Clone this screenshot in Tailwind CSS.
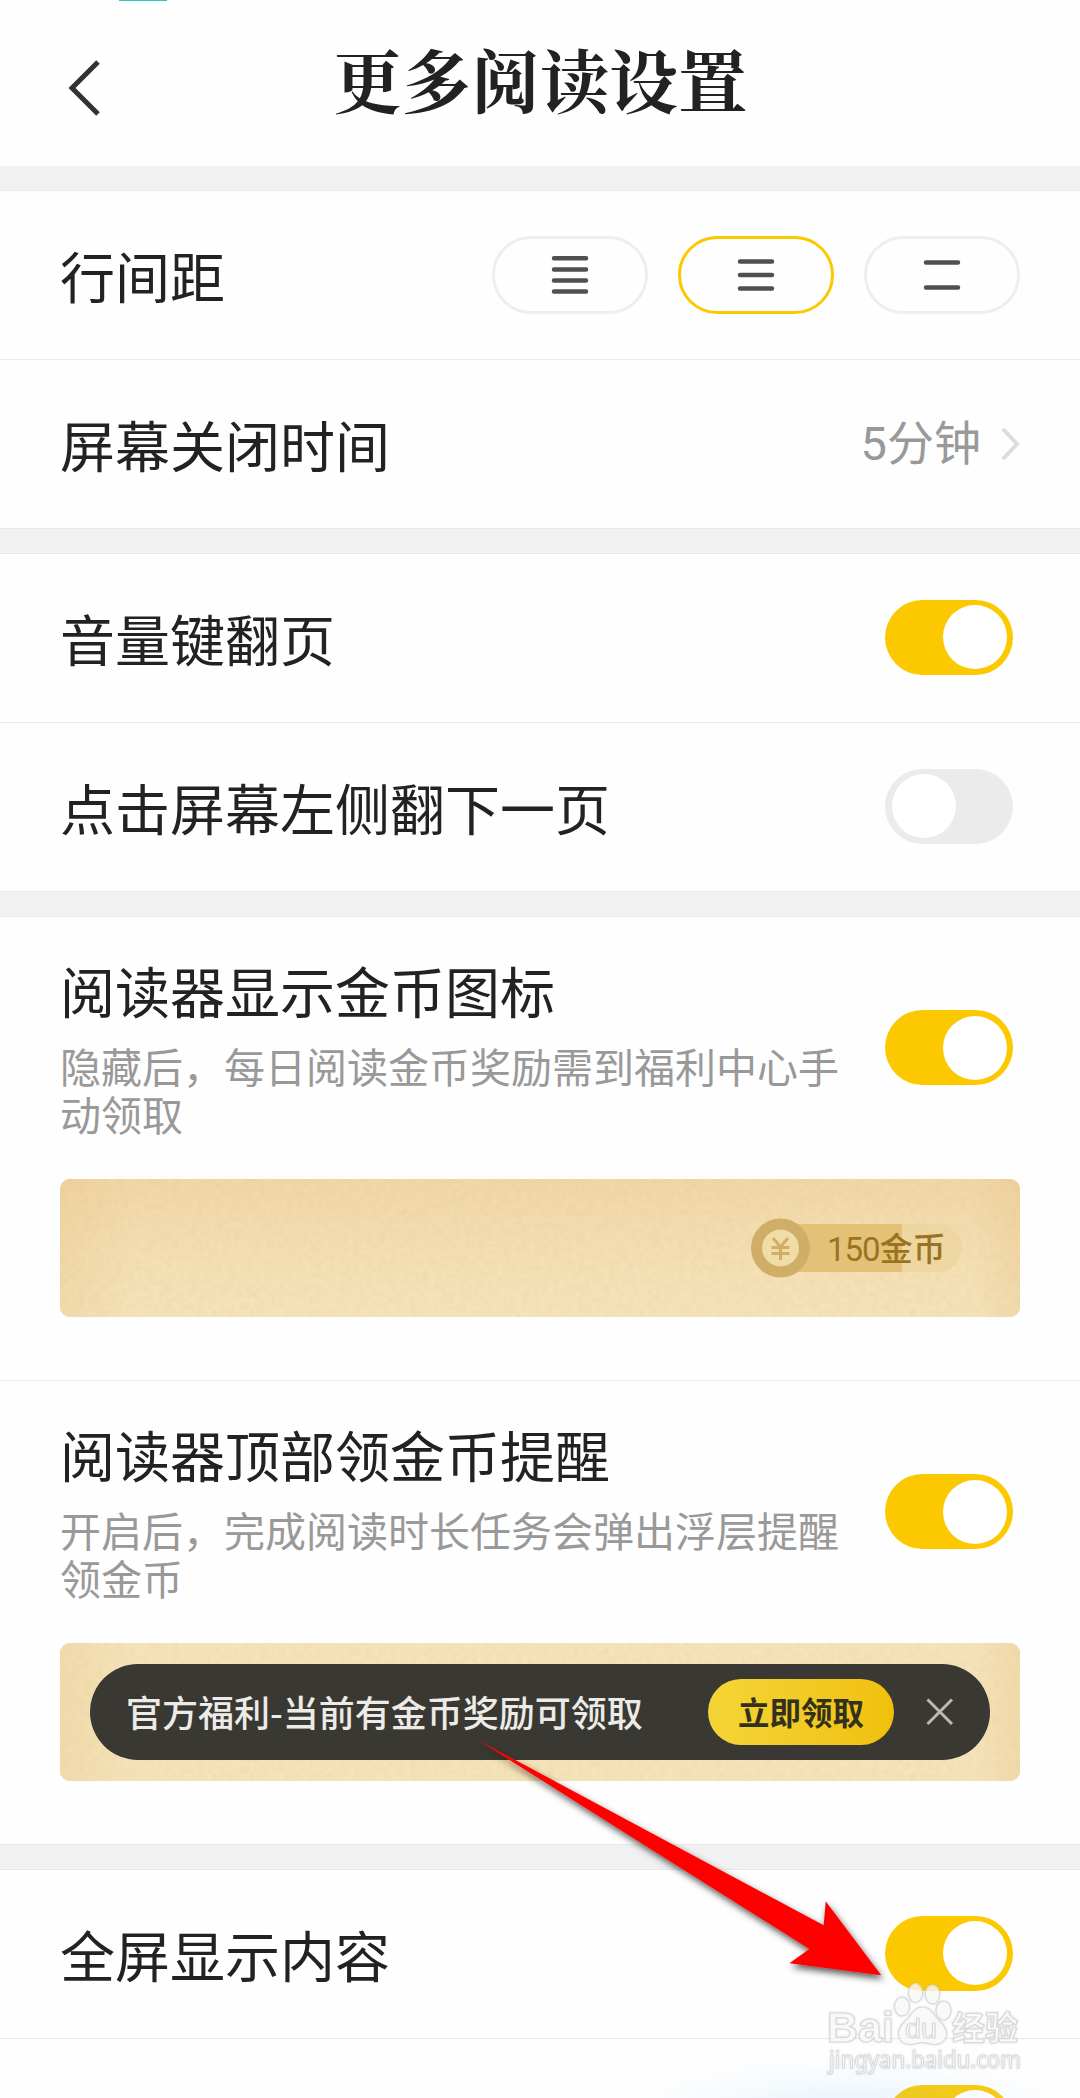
<!DOCTYPE html>
<html lang="zh-CN">
<head>
<meta charset="utf-8">
<title>更多阅读设置</title>
<script src="https://cdn.jsdelivr.net/npm/@tailwindcss/browser@4"></script>
</head>
<body class="bg-white">
<div class="relative w-[1080px] h-[2098px] overflow-hidden bg-[#fefefe] text-[#222] font-['Noto_Sans_CJK_SC',sans-serif]">
  <header class="relative flex h-[166px] items-center justify-center pb-[9px]">
    <div class="absolute left-[119px] top-0 h-px w-12 bg-[#2cc4c4]"></div>
    <svg class="absolute left-[64px] top-[56px]" width="40" height="64" viewBox="0 0 40 64" fill="none" stroke="#333" stroke-width="5"><path d="M34 6 8 32 34 58"/></svg>
    <h1 class="text-[69px] leading-[100px] font-bold font-['Noto_Serif_CJK_SC','Noto_Serif_SC','Source_Han_Serif_SC','Noto_Sans_CJK_SC',serif]">更多阅读设置</h1>
  </header>
  <div class="h-[25px] border-b border-[#e8e8e8] bg-[#f1f1f1]"></div>

  <section>
    <div class="flex h-[169px] items-center justify-between border-b border-[#e8e8e8] px-[60px]">
      <span class="pb-[2px] text-[55px] leading-[80px]">行间距</span>
      <div class="flex gap-[30px]">
        <div class="flex h-[78px] w-[156px] items-center justify-center rounded-full border-3 border-[#eee]">
          <svg width="38" height="42" viewBox="0 0 38 42" stroke="#505050" stroke-width="4.500" stroke-linecap="round"><path d="M3 4.300H35M3 15.400H35M3 26.500H35M3 37.600H35"/></svg>
        </div>
        <div class="flex h-[78px] w-[156px] items-center justify-center rounded-full border-3 border-[#fcc800]">
          <svg width="38" height="42" viewBox="0 0 38 42" stroke="#505050" stroke-width="4.500" stroke-linecap="round"><path d="M3 7.500H35M3 21H35M3 34.500H35"/></svg>
        </div>
        <div class="flex h-[78px] w-[156px] items-center justify-center rounded-full border-3 border-[#eee]">
          <svg width="38" height="42" viewBox="0 0 38 42" stroke="#505050" stroke-width="4.500" stroke-linecap="round"><path d="M3 8.500H35M3 33.500H35"/></svg>
        </div>
      </div>
    </div>
    <div class="flex h-[168px] items-center justify-between px-[60px]">
      <span class="pb-[3px] text-[55px] leading-[80px]">屏幕关闭时间</span>
      <div class="flex items-center gap-[18px] text-[#999]"><span class="pb-[4px] text-[47px] leading-[70px]"><span class="font-[Roboto,sans-serif]">5</span>分钟</span>
        <svg width="21" height="36" viewBox="0 0 21 36" fill="none" stroke="#dcdcdc" stroke-width="4"><path d="M4 3 18 18 4 33"/></svg>
      </div>
    </div>
  </section>
  <div class="h-[26px] border-y border-[#e8e8e8] bg-[#f1f1f1]"></div>

  <section>
    <div class="flex h-[169px] items-center justify-between border-b border-[#e8e8e8] pb-[2px] pl-[60px] pr-[67px]">
      <span class="pb-[1px] text-[55px] leading-[80px]">音量键翻页</span>
      <div class="flex h-[75px] w-[128px] items-center justify-end rounded-full bg-[#fcc800] px-[6px]"><div class="size-16 rounded-full bg-white"></div></div>
    </div>
    <div class="flex h-[168px] items-center justify-between pb-[2px] pl-[60px] pr-[67px]">
      <span class="pb-[1px] text-[55px] leading-[80px]">点击屏幕左侧翻下一页</span>
      <div class="flex h-[75px] w-[128px] items-center rounded-full bg-[#ebebeb] px-[7px]"><div class="size-16 rounded-full bg-white"></div></div>
    </div>
  </section>
  <div class="h-[26px] border-y border-[#e8e8e8] bg-[#f1f1f1]"></div>

  <section>
    <div class="h-[464px] border-b border-[#e8e8e8] px-[60px] pt-[32px]">
      <div class="flex h-[230px] justify-between pr-[7px]">
        <div class="w-[782px]">
          <div class="text-[55px] leading-[80px]">阅读器显示金币图标</div>
          <p class="mt-[12px] text-[41px] leading-[48px] text-[#999]">隐藏后，每日阅读金币奖励需到福利中心手动领取</p>
        </div>
        <div class="mt-[61px] flex h-[75px] w-[128px] items-center justify-end rounded-full bg-[#fcc800] px-[6px]"><div class="size-16 rounded-full bg-white"></div></div>
      </div>
      <div class="relative flex h-[138px] items-center overflow-hidden rounded-[10px] bg-[#f2ddae]">
        <svg class="absolute inset-0" width="960" height="138">
          <defs>
            <linearGradient id="paper1" x1="0" y1="0" x2="0" y2="1"><stop offset="0" stop-color="#f1d7a7"/><stop offset=".55" stop-color="#f4dfb3"/><stop offset="1" stop-color="#f5e3b9"/></linearGradient>
            <linearGradient id="edge" x1="0" x2="1"><stop offset="0" stop-color="#e6bd7c" stop-opacity=".22"/><stop offset=".08" stop-color="#e6bd7c" stop-opacity="0"/><stop offset=".95" stop-color="#e6bd7c" stop-opacity="0"/><stop offset="1" stop-color="#e6bd7c" stop-opacity=".25"/></linearGradient>
            <filter id="grain" x="0" y="0" width="100%" height="100%"><feTurbulence type="fractalNoise" baseFrequency=".16" numOctaves="3" seed="4"/><feColorMatrix values="0 0 0 0 .68  0 0 0 0 .5  0 0 0 0 .25  .7 .5 0 0 -.48"/></filter>
          </defs>
          <rect width="960" height="138" fill="url(#paper1)"/><rect width="960" height="138" fill="url(#edge)"/>
          <rect width="960" height="138" filter="url(#grain)" opacity=".35"/>
        </svg>
        <div class="relative ml-[690px] flex h-[60px] w-[220px] items-center">
          <div class="absolute left-[30px] h-12 w-[182px] rounded-r-full bg-[#ebd29a]/60"></div>
          <div class="absolute left-[30px] h-12 w-[122px] bg-[#e3c277]"></div>
          <svg class="relative" width="60" height="60" viewBox="0 0 60 60"><circle cx="30.500" cy="30" r="29.500" fill="#cfae67"/><circle cx="30.500" cy="30" r="18.500" fill="#f2dca5"/><path d="M23 20l7.500 9 7.500-9M21.500 29.500h18M21.500 35.500h18M30.500 29v13" fill="none" stroke="#cfae67" stroke-width="3"/></svg>
          <span class="relative ml-[17px] flex items-baseline font-medium leading-[60px] text-[#9a7321]"><span class="font-[Roboto,sans-serif] text-[33px] font-normal tracking-[-1px]">150</span><span class="text-[33px]">金币</span></span>
        </div>
      </div>
    </div>

    <div class="h-[463px] px-[60px] pt-[32px]">
      <div class="flex h-[230px] justify-between pr-[7px]">
        <div class="w-[782px]">
          <div class="text-[55px] leading-[80px]">阅读器顶部领金币提醒</div>
          <p class="mt-[12px] text-[41px] leading-[48px] text-[#999]">开启后，完成阅读时长任务会弹出浮层提醒领金币</p>
        </div>
        <div class="mt-[61px] flex h-[75px] w-[128px] items-center justify-end rounded-full bg-[#fcc800] px-[6px]"><div class="size-16 rounded-full bg-white"></div></div>
      </div>
      <div class="relative flex h-[138px] items-center justify-center overflow-hidden rounded-[10px] bg-[#f2ddae]">
        <svg class="absolute inset-0" width="960" height="138"><rect width="960" height="138" fill="#f5e3b9"/><rect width="960" height="138" fill="url(#edge)"/><rect width="960" height="138" filter="url(#grain)" opacity=".28"/></svg>
        <div class="relative flex h-24 w-[900px] items-center rounded-full bg-[#3a3832] pl-[36px]">
          <span class="w-[582px] pb-[3px] text-[36px] font-medium leading-[54px] text-[#ecebe7]">官方福利-当前有金币奖励可领取</span>
          <div class="flex h-[66px] w-[186px] items-center justify-center rounded-full bg-linear-to-r from-[#f4d536] to-[#f0c008] pb-[2px] text-[31.500px] font-bold leading-[48px] text-[#33301c]">立即领取</div>
          <svg class="ml-[31px]" width="30" height="30" viewBox="0 0 30 30" stroke="#bbb9b4" stroke-width="3"><path d="M2.500 2.500 27 27M27 2.500 2.500 27"/></svg>
        </div>
      </div>
    </div>
  </section>
  <div class="h-[26px] border-y border-[#e8e8e8] bg-[#f1f1f1]"></div>

  <section>
    <div class="flex h-[169px] items-center justify-between border-b border-[#e8e8e8] pb-[2px] pl-[60px] pr-[67px]">
      <span class="text-[55px] leading-[80px]">全屏显示内容</span>
      <div class="flex h-[75px] w-[128px] items-center justify-end rounded-full bg-[#fcc800] px-[6px]"><div class="size-16 rounded-full bg-white"></div></div>
    </div>
    <div class="flex h-[168px] items-center justify-end pb-[2px] pr-[67px]">
      <div class="flex h-[75px] w-[128px] items-center justify-end rounded-full bg-[#fcc800] px-[6px]"><div class="size-16 rounded-full bg-white"></div></div>
    </div>
  </section>

  <svg class="pointer-events-none absolute inset-0" width="1080" height="2098" viewBox="0 0 1080 2098">
    <defs>
      <radialGradient id="glow"><stop offset="0" stop-color="#7dc3f2" stop-opacity=".3"/><stop offset=".5" stop-color="#9dd2f6" stop-opacity=".13"/><stop offset="1" stop-color="#c9e7fb" stop-opacity="0"/></radialGradient>
      <filter id="shade" x="-10%" y="-10%" width="120%" height="120%"><feDropShadow dx="2" dy="4" stdDeviation="3.500" flood-color="#000" flood-opacity=".65"/></filter>
      <filter id="soft"><feDropShadow dx="0" dy="0" stdDeviation=".8" flood-color="#888" flood-opacity=".3"/></filter>
    </defs>
    <ellipse cx="850" cy="2125" rx="250" ry="75" fill="url(#glow)"/>
    <path d="M477 1739.500 823.700 1925.300 825.700 1901.300 881.200 1975.300 789.400 1963.300 809.400 1949Z" fill="#f00" filter="url(#shade)"/>
    <g fill="#fff" fill-opacity=".72" stroke="#d9d9d9" stroke-width="1.200" filter="url(#soft)" font-family="Liberation Sans, sans-serif">
      <text x="827" y="2042" font-size="43" font-weight="bold" textLength="67" lengthAdjust="spacingAndGlyphs">Bai</text>
      <ellipse cx="902" cy="2006.500" rx="7.500" ry="9.500"/><ellipse cx="915.500" cy="1993" rx="7" ry="9.500"/><ellipse cx="932.500" cy="1994.500" rx="7.300" ry="9.500"/><ellipse cx="943.500" cy="2010.500" rx="7.500" ry="9.500"/>
      <path d="M922.500 2007c7 0 10 5 13 9.500 4 5 11 9 11 17 0 7-5 11-12 11-5 0-8-2-12-2s-7 2-12 2c-7 0-12-4-12-11 0-8 7-12 11-17 3-4.500 6-9.500 13-9.500Z"/>
      <text x="905" y="2038" font-size="27" textLength="32" lengthAdjust="spacingAndGlyphs">du</text>
      <text x="952" y="2040" font-size="33" font-weight="bold" font-family="Noto Sans CJK SC, sans-serif">经验</text>
      <text x="829" y="2068" font-size="24" stroke-width="1" font-family="Noto Sans, sans-serif" textLength="192" lengthAdjust="spacingAndGlyphs">jingyan.baidu.com</text>
    </g>
  </svg>
</div>
</body>
</html>
